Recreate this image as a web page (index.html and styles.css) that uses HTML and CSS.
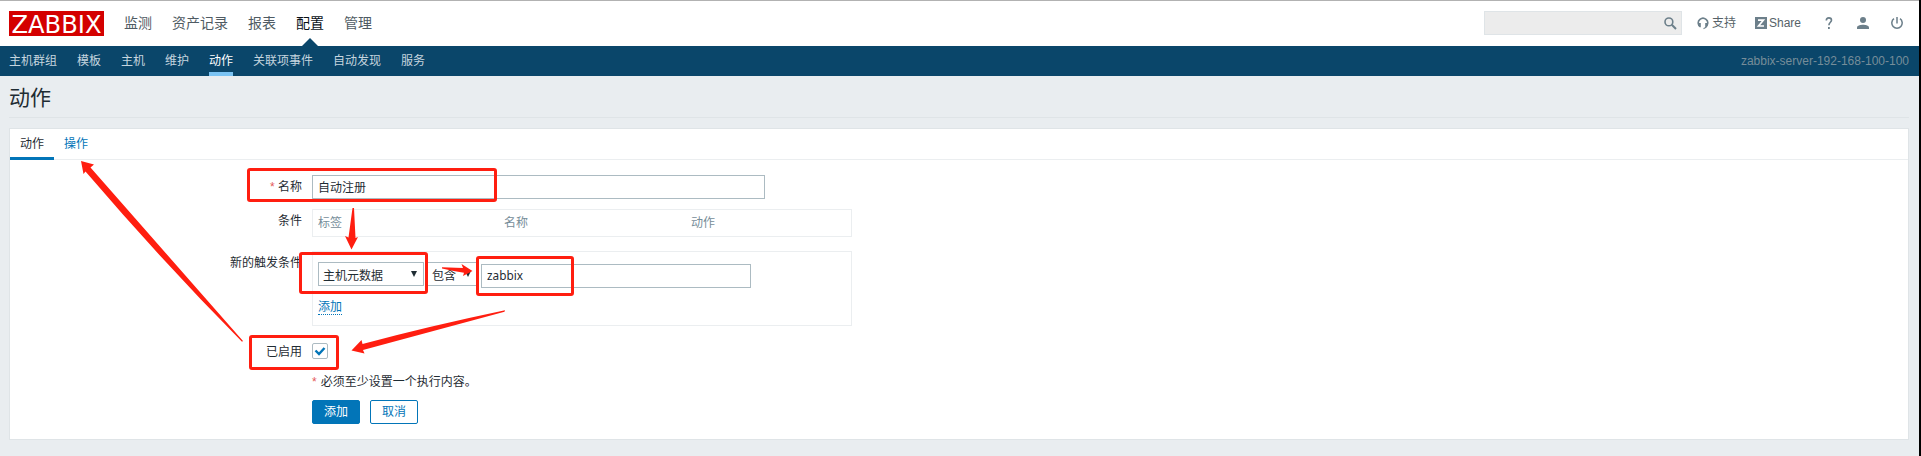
FILE: index.html
```html
<!DOCTYPE html>
<html lang="zh-CN">
<head>
<meta charset="utf-8">
<title>动作</title>
<link rel="stylesheet" href="styles.css">
</head>
<body>
<div class="page">
  <header class="header">
    <div class="logo"><svg width="95" height="25" viewBox="0 0 95 25"><text x="2.500" y="21.500" textLength="90" lengthAdjust="spacingAndGlyphs">ZABBIX</text></svg></div>
    <nav class="menu"><a>监测</a><a>资产记录</a><a>报表</a><a class="selected">配置</a><a>管理</a></nav>
    <div class="tools">
      <div class="search">
        <svg width="13" height="13" viewBox="0 0 13 13" fill="none" stroke="#6c7f8a"><circle cx="4.900" cy="4.900" r="3.900" stroke-width="1.600"/><path d="M7.800 7.800 12 12" stroke-width="2"/></svg>
      </div>
      <a class="support"><svg width="12" height="13" viewBox="0 0 12 13"><path d="M2.200 8.500A4.600 4.600 0 1 1 9.800 8.500" fill="none" stroke="#6c7f8a" stroke-width="1.600"/><path d="M1 6h2.800v4.300H2.600Q.8 9.500.8 7zM8.200 6H11v1q0 3.800-4.500 5.200v-1.300Q8 10.700 8.200 10z" fill="#6c7f8a"/></svg>支持</a>
      <a class="share"><svg width="12" height="12" viewBox="0 0 12 12"><path d="M0 0h12v12H0z" fill="#6c7f8a"/><path d="M3 3.100h5.500L3.500 9H9" fill="none" stroke="#fff" stroke-width="1.600"/></svg>Share</a>
      <svg class="help" width="8" height="12" viewBox="0 0 8 12"><path d="M1.300 3.600Q1.300.9 3.900.9T6.500 3.300C6.500 5.200 3.900 5.400 3.900 8.200" fill="none" stroke="#6c7f8a" stroke-width="1.600"/><path d="M3 10h1.800v2H3z" fill="#6c7f8a"/></svg>
      <svg class="user" width="12" height="12" viewBox="0 0 12 12" fill="#6c7f8a"><circle cx="6" cy="3" r="3"/><path d="M0 12v-1.500C0 8.500 3.500 7.700 6 7.700s6 .8 6 2.800V12z"/></svg>
      <svg class="power" width="12" height="12" viewBox="0 0 12 12" fill="none" stroke="#6c7f8a" stroke-width="1.500"><path d="M6 0v6.500M3 1.700a5.200 5.200 0 1 0 6 0"/></svg>
    </div>
  </header>
  <nav class="subnav">
    <a>主机群组</a><a>模板</a><a>主机</a><a>维护</a><a class="selected">动作</a><a>关联项事件</a><a>自动发现</a><a>服务</a>
    <span class="server">zabbix-server-192-168-100-100</span>
  </nav>
  <h1 class="title">动作</h1>
  <main class="card">
    <div class="tabs"><a class="tab active">动作</a><a class="tab">操作</a></div>
    <form class="form">
      <div class="row name-row">
        <label class="label"><span class="star">*</span> 名称</label>
        <div class="field name-field">自动注册</div>
      </div>
      <div class="row cond-row">
        <label class="label">条件</label>
        <div class="conditions"><span>标签</span><span>名称</span><span>动作</span></div>
      </div>
      <div class="row new-row">
        <label class="label">新的触发条件</label>
        <div class="new-condition">
          <div class="controls">
            <div class="select type">主机元数据<i class="caret"></i></div>
            <div class="select operator">包含<i class="caret"></i></div>
            <div class="field value">zabbix</div>
          </div>
          <a class="add-link">添加</a>
        </div>
      </div>
      <div class="row enabled-row">
        <label class="label">已启用</label>
        <span class="checkbox"><svg width="12" height="10" viewBox="0 0 12 10"><path d="M1.500 4.500 5 8 10.500 2" fill="none" stroke="#0275b8" stroke-width="2.400"/></svg></span>
      </div>
      <div class="note"><span class="star">*</span><span>必须至少设置一个执行内容。</span></div>
      <div class="buttons"><button type="button" class="btn primary">添加</button><button type="button" class="btn">取消</button></div>
    </form>
  </main>
  <svg class="marks" width="1921" height="456" viewBox="0 0 1921 456">
    <g fill="none" stroke="#ff1e10" stroke-width="3">
      <rect x="248.500" y="169.500" width="247" height="31" rx="1.500"/>
      <rect x="300.500" y="253.500" width="126" height="39" rx="1.500"/>
      <rect x="477.500" y="257.500" width="95" height="37" rx="1.500"/>
      <rect x="250.500" y="336.500" width="87" height="32" rx="1.500"/>
    </g>
    <g fill="#ff1e10">
      <path d="M352.500 208h1.500L355.500 238l2.500-1L351.500 249.500 345 236l3.500 1.500z"/>
      <path d="M442 267.300 463 268 461.500 264 472.500 271 463 276l1-3.200Q452 271 442 268.600z"/>
      <path d="M505 310.300 504.500 311.800Q430 332 363 350l1.500 3.500L351.500 350.500 361.500 340 362.500 344Q430 326 505 310.300z"/>
      <path d="M81 161 94 164.500 90.500 167.500Q170 258 243 341L242 341.800Q163 262 85.500 171.500L83.500 174z"/>
    </g>
  </svg>
</div>
</body>
</html>
```
FILE: styles.css
```css
* { box-sizing: border-box; }
body {
  margin: 0;
  overflow: hidden;
  font: 12px/18px "Liberation Sans", "Noto Sans CJK SC", sans-serif;
  color: #1f2c33;
}
.page {
  position: relative;
  width: 1921px;
  height: 456px;
  background: #e9edf0;
  border-right: 2px solid #000;
  overflow: hidden;
}
.header {
  display: flex;
  align-items: flex-start;
  height: 46px;
  padding: 10px 16px 0 9px;
  background: #fff;
  border-top: 1px solid #b2b2b2;
}
.logo { width: 95px; height: 25px; background: #d40000; }
.logo svg { display: block; overflow: visible; }
.logo text { font: 25px "DejaVu Sans", sans-serif; fill: #fff; }
.menu { display: flex; gap: 20px; height: 35px; margin-left: 20px; font-size: 14px; line-height: 25px; color: #4f5b63; }
.menu .selected { position: relative; color: #0a1117; }
.menu .selected::after {
  content: "";
  position: absolute;
  left: 6px;
  bottom: 0;
  border: 8px solid transparent;
  border-top: 0;
  border-bottom-color: #0a466a;
}
.tools { display: flex; align-items: center; height: 24px; margin-left: auto; color: #566268; }
.search { display: flex; align-items: center; justify-content: flex-end; width: 198px; height: 24px; padding-right: 4px; background: #ececec; border: 1px solid #dfe4e7; }
.support, .share { display: flex; align-items: center; }
.support { gap: 3px; margin-left: 15px; }
.share { gap: 2px; margin-left: 19px; }
.help { margin-left: 24px; }
.user { margin-left: 24px; }
.power { margin-left: 22px; }
.subnav { display: flex; gap: 20px; height: 30px; padding: 0 10px 0 9px; background: #0a466a; color: #c5d5df; line-height: 31px; }
.subnav .selected { color: #fff; border-bottom: 4px solid #7ac3f3; }
.server { margin-left: auto; color: #768d99; }
.title { height: 42px; margin: 0 10px 0 9px; border-bottom: 1px solid #dfe4e7; font-size: 21px; font-weight: 400; line-height: 44px; }
.card { height: 312px; margin: 10px 10px 0 9px; background: #fff; border: 1px solid #dfe4e7; }
.tabs { display: flex; height: 31px; border-bottom: 1px solid #ebeef0; }
.tab { height: 31px; padding: 0 10px; line-height: 31px; color: #0275b8; }
.tab.active { color: #1f2c33; border-bottom: 3px solid #0275b8; }
.row { display: flex; }
.label { width: 292px; margin-right: 10px; text-align: right; white-space: nowrap; }
.star { color: #e45959; }
.field { height: 24px; padding-left: 5px; background: #fff; border: 1px solid #acbbc2; line-height: 24px; }
.name-row { margin-top: 15px; }
.name-row .label { line-height: 24px; }
.name-field { width: 453px; }
.cond-row { margin-top: 10px; }
.cond-row .label { line-height: 25px; }
.conditions { display: grid; grid-template-columns: 186px 187px 1fr; width: 540px; height: 28px; padding-left: 5px; border: 1px solid #ebeef0; line-height: 27px; color: #768d99; }
.new-row { margin-top: 14px; }
.new-row .label { line-height: 24px; }
.new-condition { width: 540px; height: 75px; padding: 10px 5px; border: 1px solid #ebeef0; }
.controls { display: flex; height: 26px; }
.select { display: flex; justify-content: space-between; height: 24px; padding: 0 6px 0 4px; border: 1px solid #acbbc2; line-height: 26px; }
.caret { width: 0; height: 0; margin-top: 8px; border: 3px solid transparent; border-top: 6px solid #1f2c33; border-bottom: 0; }
.type { width: 106px; }
.operator { width: 50px; margin-left: 3px; padding-right: 5px; }
.value { width: 270px; margin: 2px 0 0 4px; padding-left: 5px; font-family: "Noto Sans", sans-serif; font-size: 11.800px; line-height: 21px; }
.add-link { display: inline-block; height: 18px; margin-top: 9px; border-bottom: 1px dotted #0275b8; line-height: 20px; color: #0275b8; }
.enabled-row { margin-top: 17px; }
.enabled-row .label { line-height: 18px; }
.checkbox { display: flex; align-items: center; justify-content: center; width: 16px; height: 16px; border: 1px solid #acbbc2; border-radius: 2px; }
.note { display: flex; gap: 4px; height: 18px; margin: 12px 0 0 302px; }
.buttons { display: flex; gap: 10px; margin: 9px 0 0 302px; }
.btn { width: 48px; height: 24px; padding: 0; background: #fff; border: 1px solid #0275b8; border-radius: 2px; color: #0275b8; font: inherit; line-height: 22px; }
.primary { background: #0275b8; color: #fff; }
.marks { position: absolute; left: 0; top: 0; }
```
